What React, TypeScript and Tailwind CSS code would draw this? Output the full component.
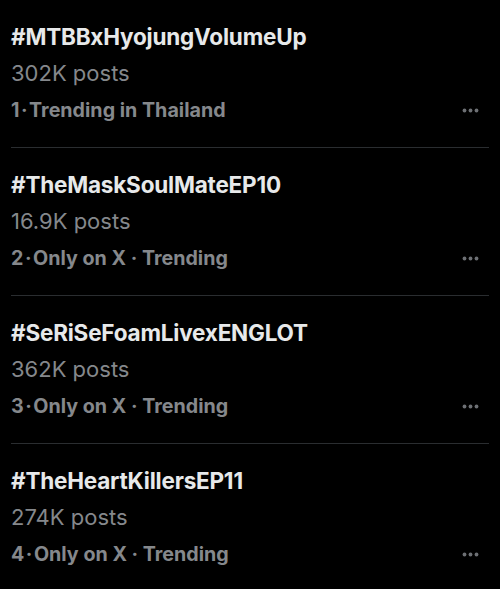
import React from 'react';

type Trend = {
  rank: number;
  tag: string;
  posts: string;
  context: string;
};

const trends: Trend[] = [
  { rank: 1, tag: '#MTBBxHyojungVolumeUp', posts: '302K posts', context: 'Trending in Thailand' },
  { rank: 2, tag: '#TheMaskSoulMateEP10', posts: '16.9K posts', context: 'Only on X · Trending' },
  { rank: 3, tag: '#SeRiSeFoamLivexENGLOT', posts: '362K posts', context: 'Only on X · Trending' },
  { rank: 4, tag: '#TheHeartKillersEP11', posts: '274K posts', context: 'Only on X · Trending' },
];

const MoreDots: React.FC = () => (
  <svg width="17" height="5" viewBox="0 0 17 5" className="shrink-0">
    <circle cx="2.5" cy="2.5" r="1.9" fill="#6d7074" />
    <circle cx="8.5" cy="2.5" r="1.9" fill="#6d7074" />
    <circle cx="14.5" cy="2.5" r="1.9" fill="#6d7074" />
  </svg>
);

const App: React.FC = () => {
  return (
    <div
      className="w-[500px] h-[589px] bg-black overflow-hidden"
      style={{ fontFamily: 'Inter, Roboto, "Liberation Sans", sans-serif' }}
    >
      {trends.map((t, i) => (
        <div
          key={t.rank}
          className={`ml-[11px] mr-[11px] pt-[18px] pb-[18px] ${i < trends.length - 1 ? 'border-b border-[#2a2d30]' : ''}`}
        >
          <div className="h-[37px] flex items-center text-[22.5px] font-bold text-[#e7e9ea] tracking-[-0.2px]">
            {t.tag}
          </div>
          <div className="h-[37px] flex items-center text-[22px] text-[#85888c]">
            {t.posts}
          </div>
          <div className="h-[37px] flex items-center justify-between">
            <span className="text-[19.7px] font-bold text-[#85888c]">
              {t.rank}
              <span className="px-[1.5px]">·</span>
              {t.context}
            </span>
            <span className="mr-[10px] -mt-[1px]">
              <MoreDots />
            </span>
          </div>
        </div>
      ))}
    </div>
  );
};

export default App;
